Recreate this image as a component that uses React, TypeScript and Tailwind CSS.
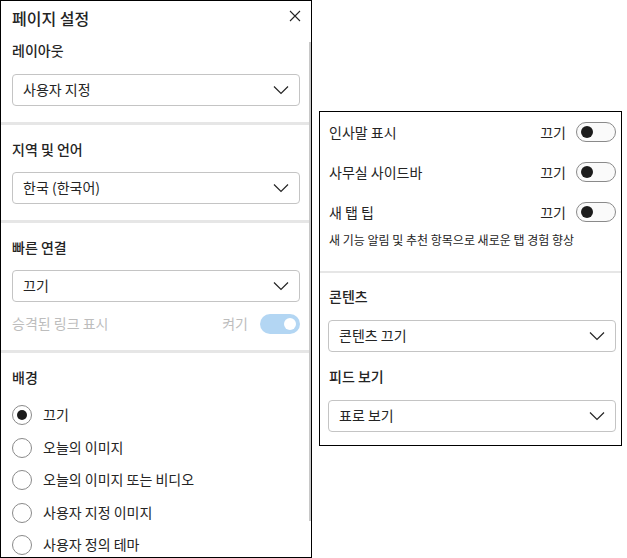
import React from 'react';

function Chevron() {
  return (
    <svg width="16" height="10" viewBox="0 0 16 10" fill="none" stroke="#242424" strokeWidth={1.2}>
      <path d="M1 1.5l7 7 7-7" />
    </svg>
  );
}

function Select({ value }: { value: string }) {
  return (
    <div className="flex h-[32px] items-center justify-between rounded-[4px] border border-[#c4c4c4] bg-white pl-[10px] pr-[10px] text-[14px] text-[#242424]">
      <span className="-mt-[2px]">{value}</span>
      <Chevron />
    </div>
  );
}

function Toggle({ on, disabled }: { on?: boolean; disabled?: boolean }) {
  if (on) {
    return (
      <div className={`flex h-[20px] w-[40px] items-center justify-end rounded-full pr-[4px] ${disabled ? 'bg-[#b3d6f3]' : 'bg-[#0f6cbd]'}`}>
        <div className="h-[12px] w-[12px] rounded-full bg-white" />
      </div>
    );
  }
  return (
    <div className="flex h-[20px] w-[40px] items-center rounded-full border border-[#8a8a8a] bg-[#fafafa] pl-[4px]">
      <div className="h-[12px] w-[12px] rounded-full bg-[#1b1b1b]" />
    </div>
  );
}

function Divider() {
  return <div className="h-[3px] bg-[#e6e6e6]" />;
}

function Label({ children, className = '' }: { children: React.ReactNode; className?: string }) {
  return (
    <div className={`flex h-[20px] items-center text-[14px] font-medium text-[#242424] ${className}`}>
      <span className="-mt-[1px]">{children}</span>
    </div>
  );
}

function Radio({ label, checked }: { label: string; checked?: boolean }) {
  return (
    <div className="flex h-[32.5px] items-center gap-[11px]">
      <div className="flex h-[20px] w-[20px] items-center justify-center rounded-full border border-[#8a8a8a] bg-white">
        {checked && <div className="h-[10px] w-[10px] rounded-full bg-[#1b1b1b]" />}
      </div>
      <span className="-mt-[1px] text-[14px] text-[#242424]">{label}</span>
    </div>
  );
}

function SwitchRow({ label }: { label: string }) {
  return (
    <div className="flex h-[40px] items-center justify-between text-[14px] text-[#242424]">
      <span>{label}</span>
      <div className="flex items-center gap-[10px]">
        <span>끄기</span>
        <Toggle />
      </div>
    </div>
  );
}

export default function App() {
  const radios = ['끄기', '오늘의 이미지', '오늘의 이미지 또는 비디오', '사용자 지정 이미지', '사용자 정의 테마'];
  return (
    <div className="flex h-[558px] w-[627px] items-start bg-white font-['Noto_Sans_CJK_KR','Noto_Sans',sans-serif] text-[#242424]">
      {/* left panel */}
      <div className="relative h-[558px] w-[312px] shrink-0 overflow-hidden border border-black">
        <div className="absolute right-0 top-[41px] h-[479px] w-[2px] bg-[#c8c8c8]" />
        <div className="flex h-[34px] items-center justify-between pl-[11px] pr-[10px]">
          <span className="text-[16px] font-medium">페이지 설정</span>
          <svg width="12" height="12" viewBox="0 0 12 12" stroke="#242424" strokeWidth={1.1} className="-mt-[5px]">
            <path d="M1 1l10 10M11 1L1 11" />
          </svg>
        </div>

        <div className="px-[11px]">
          <Label className="mt-[6px]">레이아웃</Label>
          <div className="mt-[13px]">
            <Select value="사용자 지정" />
          </div>
        </div>
        <div className="mr-[2px] mt-[16px]">
          <Divider />
        </div>

        <div className="px-[11px]">
          <Label className="mt-[15px]">지역 및 언어</Label>
          <div className="mt-[12px]">
            <Select value="한국 (한국어)" />
          </div>
        </div>
        <div className="mr-[2px] mt-[16px]">
          <Divider />
        </div>

        <div className="px-[11px]">
          <Label className="mt-[15px]">빠른 연결</Label>
          <div className="mt-[12px]">
            <Select value="끄기" />
          </div>
          <div className="mt-[12px] flex h-[20px] items-center justify-between text-[14px] text-[#bdbdbd]">
            <span className="-mt-[2px]">승격된 링크 표시</span>
            <div className="flex items-center gap-[12px]">
              <span className="-mt-[2px]">켜기</span>
              <Toggle on disabled />
            </div>
          </div>
        </div>
        <div className="mr-[2px] mt-[16px]">
          <Divider />
        </div>

        <div className="px-[11px]">
          <Label className="mt-[15px]">배경</Label>
          <div className="mt-[11px] flex flex-col">
            {radios.map((r, i) => (
              <Radio key={r} label={r} checked={i === 0} />
            ))}
          </div>
        </div>
      </div>

      {/* right panel */}
      <div className="ml-[7px] mt-[111px] flex h-[335px] w-[303px] shrink-0 flex-col border border-black">
        <div className="pl-[9px] pr-[5px]">
          <SwitchRow label="인사말 표시" />
          <SwitchRow label="사무실 사이드바" />
          <SwitchRow label="새 탭 팁" />
          <div className="flex h-[16px] items-center text-[12px] text-[#242424]">새 기능 알림 및 추천 항목으로 새로운 탭 경험 향상</div>
        </div>
        <div className="mt-[23px] h-[2px] shrink-0 bg-[#e6e6e6]" />
        <div className="pl-[8px] pr-[5px]">
          <Label className="mt-[14px] pl-[1px]">콘텐츠</Label>
          <div className="mt-[13px]">
            <Select value="콘텐츠 끄기" />
          </div>
          <Label className="mt-[15px] pl-[1px]">피드 보기</Label>
          <div className="mt-[13px]">
            <Select value="표로 보기" />
          </div>
        </div>
      </div>
    </div>
  );
}
